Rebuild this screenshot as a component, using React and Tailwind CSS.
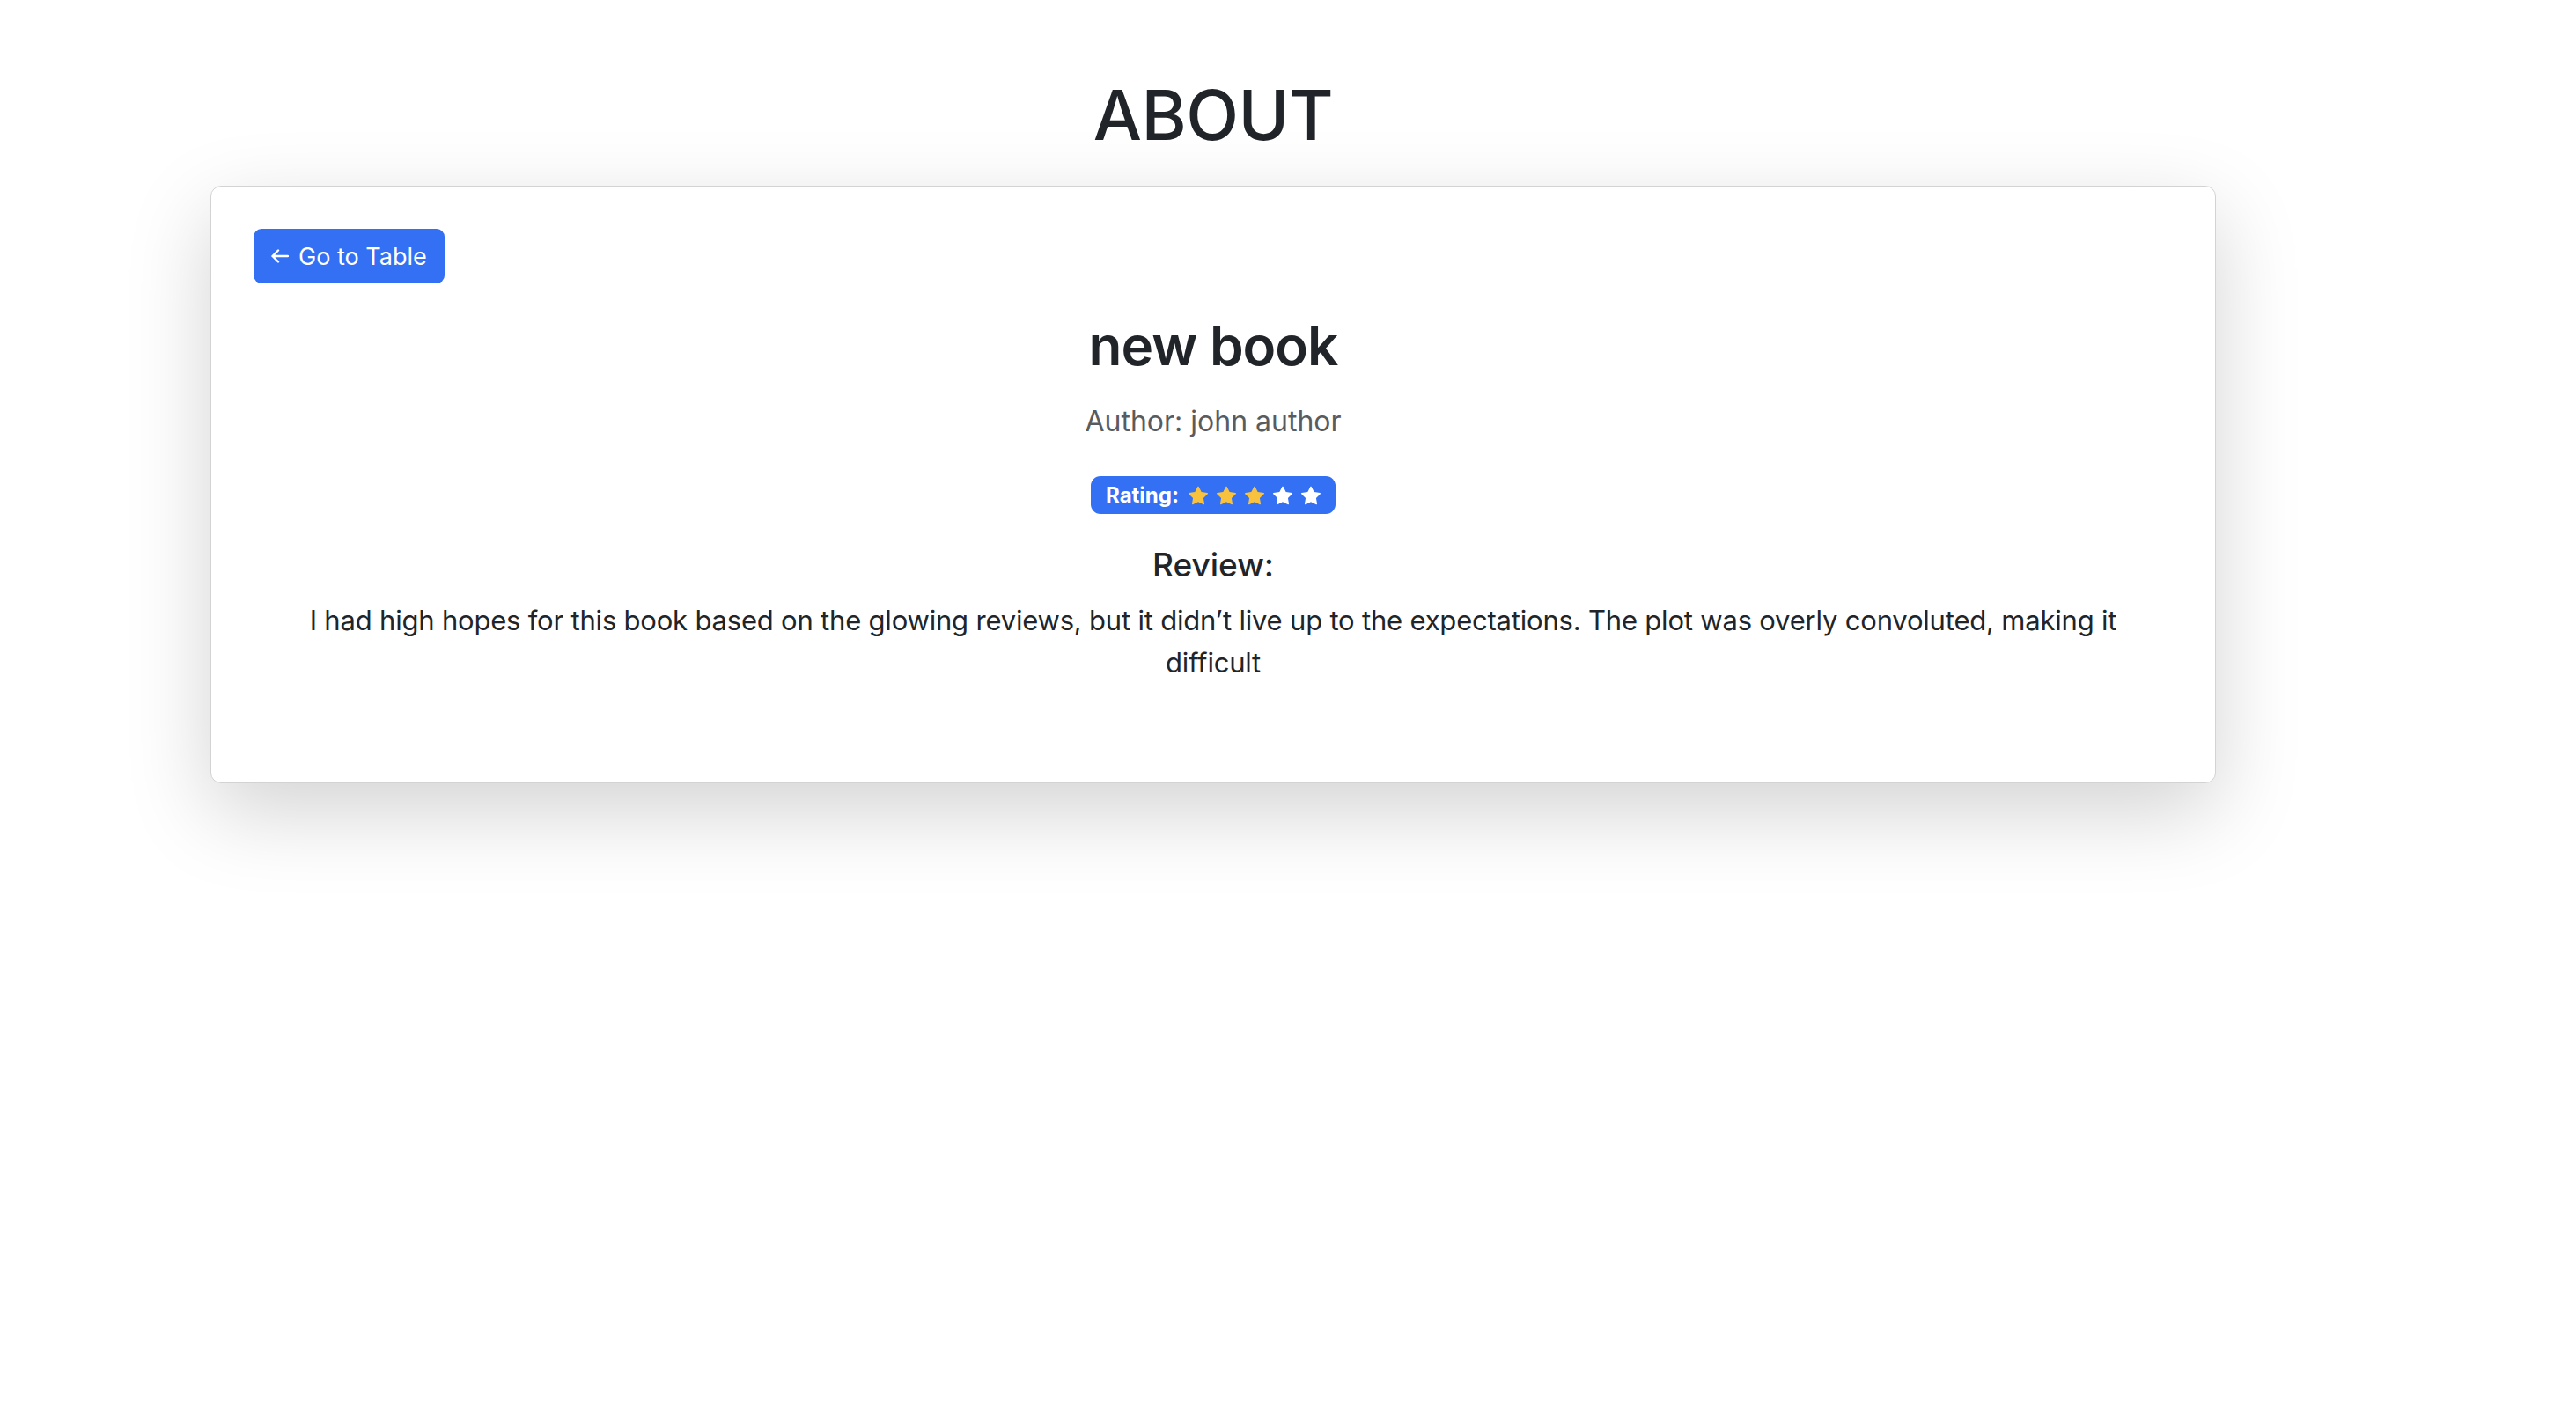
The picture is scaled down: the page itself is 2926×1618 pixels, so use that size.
const Star = ({ filled }) => (
    <svg viewBox="0 0 16 16" className="w-[22px] h-[22px]" fill={filled ? "#f8c23e" : "#ffffff"}>
        <path d="M3.612 15.443c-.386.198-.824-.149-.746-.592l.83-4.73L.173 6.765c-.329-.314-.158-.888.283-.95l4.898-.696L7.538.792c.197-.39.73-.39.927 0l2.184 4.327 4.898.696c.441.062.612.636.282.95l-3.522 3.356.83 4.73c.078.443-.36.79-.746.592L8 13.187l-4.389 2.256z" />
    </svg>
)

const App = () => {
    const rating = 3

    return (
        <div className="min-h-screen w-full bg-white text-[#212529] font-['Inter','Liberation_Sans',sans-serif]">
            <div className="pl-[239px] pt-[83px]">
                <div className="w-[2278px] flex flex-col items-center">
                    <h1 className="text-[78px] leading-[96px] font-medium mb-[32px] tracking-[-0.5px]">ABOUT</h1>

                    <div className="w-full bg-white border border-[#d3d3d3] rounded-[12px] p-[48px] shadow-[0_32px_96px_rgba(0,0,0,0.175)]">
                        <div>
                            <button className="h-[62px] px-[20px] rounded-[9px] bg-[#3370f4] text-white flex items-center gap-[11px] text-[27px]">
                                <svg viewBox="0 0 20 16" className="w-[20px] h-[16px]" fill="none" stroke="currentColor" strokeWidth="2.4" strokeLinecap="round" strokeLinejoin="round">
                                    <path d="M19 8H1.5M8 1.5L1.5 8L8 14.5" />
                                </svg>
                                <span className="leading-none">Go to Table</span>
                            </button>
                        </div>

                        <div className="flex flex-col items-center text-center">
                            <h2 className="mt-[32px] text-[62px] leading-[77px] font-semibold tracking-[-1px]">new book</h2>
                            <p className="mt-[22px] text-[32px] leading-[52px] text-[#595c5f]">Author: john author</p>

                            <div className="mt-[36px] h-[43px] px-[17px] rounded-[11px] bg-[#3370f4] flex items-center">
                                <span className="text-white font-bold text-[24px] leading-none mr-[11px]">Rating:</span>
                                <div className="flex items-center gap-[10px]">
                                    {[1, 2, 3, 4, 5].map((n) => (
                                        <Star key={n} filled={n <= rating} />
                                    ))}
                                </div>
                            </div>

                            <h5 className="mt-[35px] text-[37px] leading-[46px] font-medium">Review:</h5>
                            <p className="mt-[16px] mb-[64px] px-[45px] text-[31px] leading-[48px] tracking-[-0.2px]">
                                I had high hopes for this book based on the glowing reviews, but it didn’t live up to the expectations. The plot was overly convoluted, making it difficult
                            </p>
                        </div>
                    </div>
                </div>
            </div>
        </div>
    )
}

export default App
